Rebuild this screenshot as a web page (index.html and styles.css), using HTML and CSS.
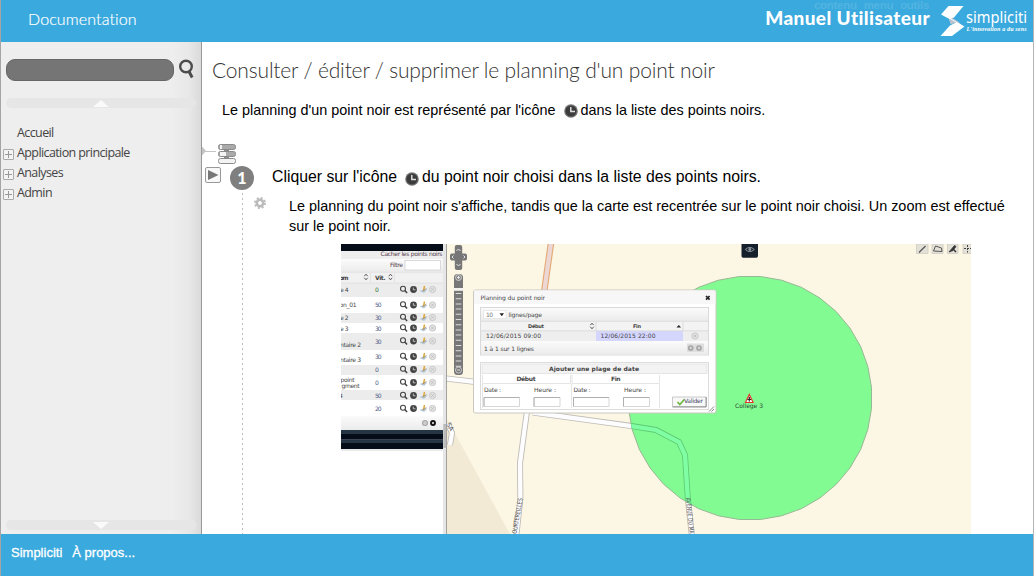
FILE: index.html
```html
<!DOCTYPE html>
<html lang="fr">
<head>
<meta charset="utf-8">
<title>Manuel Utilisateur</title>
<link rel="stylesheet" href="styles.css">
</head>
<body>
<svg class="defs" width="0" height="0">
  <defs>
    <linearGradient id="soft" x1="0" y1="0" x2="0" y2="1"><stop offset="0" stop-color="#fbfbfb"/><stop offset="1" stop-color="#ebebeb"/></linearGradient>
    <symbol id="clock" viewBox="0 0 14 14"><circle cx="7" cy="7" r="6.8" fill="#777"/><circle cx="7" cy="7" r="5.6" fill="#3c3c3c"/><path d="M6.800 3v4.400H11" fill="none" stroke="#ddd" stroke-width="1.500"/></symbol>
    <symbol id="off" viewBox="0 0 8 8"><circle cx="4" cy="4" r="3.200" fill="#e2e2e2" stroke="#c8c8c8" stroke-width=".9"/><path d="M2.700 2.700l2.600 2.600M5.300 2.700L2.700 5.300" stroke="#bbb" stroke-width=".8"/></symbol>
    <g id="tools">
      <circle cx="403" cy="-.8" r="2.500" fill="none" stroke="#444" stroke-width="1.100"/><path d="M404.800 1l2.300 2.500" stroke="#444" stroke-width="1.500"/>
      <circle cx="413.500" cy="0" r="3.400" fill="#444"/><path d="M413.300-2v2.300h2.200" fill="none" stroke="#ccc" stroke-width=".9"/>
      <path d="M419.500 1.500l4-1.500 4 0-3.500 3.500z" fill="#b5c9dc"/><path d="M424.500-3.500l-1 5" stroke="#dda83c" stroke-width="1.500"/><path d="M426.500-1l-4 2.500" stroke="#9a8a70" stroke-width=".8"/>
      <use href="#off" x="428.500" y="-4" width="8" height="8"/>
    </g>
    <g id="sort"><path d="M-1.700-.8L0-2.800 1.700-.8M-1.700.8L0 2.800 1.700.8" fill="none" stroke="#333" stroke-width=".8"/></g>
  </defs>
</svg>
<div class="page">
  <header class="top">
    <a class="top-doc">Documentation</a>
    <div class="skip"><span>contenu</span><span>menu</span><span>outils</span></div>
    <div class="brand">
      <span class="brand-title">Manuel Utilisateur</span>
      <svg class="logo" width="90" height="36" viewBox="938 3 90 36">
        <path d="M948 16l9 5.500 4 4.500-7-2-6-4z" fill="#b9c4d1"/>
        <path d="M947.500 6h15l-9.500 11.500-3 1 13.500 8L951 36h-11.500l9.500-10.500 6-3L940 14.500z" fill="#fff"/>
        <path d="M948 18.500l7.500 4-6 1.800z" fill="#b9c4d1"/>
        <text class="logo-name" x="965" y="23" textLength="61" lengthAdjust="spacingAndGlyphs">simpliciti</text>
        <text class="logo-tag" x="965.500" y="31.300" textLength="60">L'innovation a du sens</text>
      </svg>
    </div>
  </header>
  <div class="middle">
    <aside class="side">
      <div class="search">
        <input class="search-field" type="text" aria-label="Recherche">
        <svg width="18" height="20" viewBox="0 0 18 20"><circle cx="9" cy="7.500" r="5.800" fill="none" stroke="#4c4c4c" stroke-width="2.400"/><path d="M12 12.500l3.200 6" stroke="#4c4c4c" stroke-width="3"/></svg>
      </div>
      <div class="scroll-bar"><i class="arrow up"></i></div>
      <nav class="menu">
        <a class="leaf">Accueil</a>
        <a><i class="plus"></i>Application principale</a>
        <a><i class="plus"></i>Analyses</a>
        <a><i class="plus"></i>Admin</a>
      </nav>
      <div class="scroll-bar bottom"><i class="arrow down"></i></div>
    </aside>
    <main class="content">
      <h1>Consulter / éditer / supprimer le planning d'un point noir</h1>
      <p class="intro"><span>Le planning d'un point noir est représenté par l'icône</span><svg width="14" height="14"><use href="#clock"/></svg><span>dans la liste des points noirs.</span></p>
      <div class="collapse">
        <svg width="36" height="22" viewBox="202 143 36 22">
          <path d="M202 146.500l4 4.500-4 4.500z" fill="#c4c4c4"/><path d="M205 151.500h11" stroke="#c4c4c4"/>
          <path d="M224 148h5v14h-5z" fill="#8a8a8a"/>
          <g stroke="#8a8a8a"><rect x="218.500" y="144.500" width="17" height="5" rx="2" fill="#aaa"/><rect x="218.500" y="151.500" width="17" height="5" rx="2" fill="#aaa"/><rect x="218.500" y="158.500" width="17" height="5" rx="2" fill="#f3f3f3"/></g>
          <path d="M220 145h2v4h-2zM220 152h6v4h-6z" fill="#f3f3f3"/>
        </svg>
      </div>
      <section class="step">
        <div class="rail">
          <svg class="play" width="16" height="16"><rect x=".5" y=".5" width="15" height="15" rx="1.500" fill="#f8f8f8" stroke="#999"/><path d="M3 3l10.500 5L3 13z" fill="#777"/></svg>
          <b class="number">1</b>
        </div>
        <div class="step-main">
          <p class="step-title"><span>Cliquer sur l'icône</span><svg width="14" height="14"><use href="#clock"/></svg><span>du point noir choisi dans la liste des points noirs.</span></p>
          <div class="result">
            <svg class="gear" width="12" height="12" viewBox="-6 -6 12 12"><circle r="3.200" fill="none" stroke="#bbb" stroke-width="2.600"/><circle r="5" fill="none" stroke="#bbb" stroke-width="2" stroke-dasharray="2 1.927"/></svg>
            <p>Le planning du point noir s'affiche, tandis que la carte est recentrée sur le point noir choisi. Un zoom est effectué<br>sur le point noir.</p>
          </div>
          <svg class="shot" width="630" height="290" viewBox="341 244 630 290">
            <!-- map background -->
            <path d="M341 244h630v290H341z" fill="#fcf6e4"/>
            <path d="M447 419l63 115h-63z" fill="#f3ead5"/>
            <!-- roads -->
            <g fill="none" stroke-linejoin="round">
              <path d="M551 243l-7 50" stroke="#e3a873" stroke-width="6.500"/><path d="M551 243l-7 50" stroke="#ecd7d5" stroke-width="4.300"/>
              <g stroke="#bdbbb4" stroke-width="6"><path d="M446 378.500l30 3.500"/><path d="M533 412.500l97 13.300 26 4.200 23 12 6 13 2.800 43 4 37"/><path d="M527 411l-7 52 .4 35-4 37"/><path d="M448 424l4 9-2 12"/></g>
              <g stroke="#fdfcff" stroke-width="4.300"><path d="M446 378.500l30 3.500"/><path d="M533 412.500l97 13.300 26 4.200 23 12 6 13 2.800 43 4 37"/><path d="M527 411l-7 52 .4 35-4 37"/><path d="M448 424l4 9-2 12"/></g>
            </g>
            <clipPath id="zone"><path id="ring" d="M760.600 276.500l21 3.700 20 7.200 18.400 10.700 16.300 13.600 13.600 16.300 10.700 18.400 7.200 20 3.700 21v21.200l-3.700 21-7.200 20-10.700 18.400-13.600 16.300-16.300 13.600-18.400 10.700-20 7.200-21 3.700h-21.200l-21-3.700-20-7.200-18.400-10.700-16.300-13.600-13.600-16.300-10.700-18.400-7.200-20-3.700-21v-21.200l3.700-21 7.200-20 10.700-18.400 13.600-16.300 16.300-13.600 18.400-10.700 20-7.200 21-3.700z"/></clipPath>
            <use href="#ring" fill="#82fc92" stroke="#97b894"/>
            <g clip-path="url(#zone)" fill="none"><path d="M533 412.500l97 13.300 26 4.200 23 12 6 13 2.800 43 4 37" stroke="#60cb74" stroke-width="6"/><path d="M533 412.500l97 13.300 26 4.200 23 12 6 13 2.800 43 4 37" stroke="#7ffea4" stroke-width="4.300"/></g>
            <g class="street">
              <text transform="translate(516.500 534) rotate(-80)" textLength="36" lengthAdjust="spacingAndGlyphs">OURTEREILLES</text>
              <text transform="translate(685.800 498) rotate(84)" textLength="36" lengthAdjust="spacingAndGlyphs">AVENUE DU MA</text>
              <text transform="translate(446 424) rotate(60)">SA</text>
            </g>
            <path d="M749.300 394.500l3.800 8h-7.600z" fill="#fff" stroke="#e23b2e" stroke-width="1.200"/><path d="M749.300 397v4.500M747.500 399.500h3.600" stroke="#222" stroke-width="1.200"/>
            <text class="s7" x="735" y="408" textLength="28" fill="#2f4a32">College 3</text>
            <!-- pan and zoom control -->
            <g fill="#777">
              <path d="M454.800 247q0-2 2-2h3.400q2 0 2 2v6.500h3q1.800 0 1.800 2v3q0 2-1.800 2h-3v7.500q0 2-2 2h-3.400q-2 0-2-2v-7.500h-3q-1.800 0-1.800-2v-3q0-2 1.800-2h3z"/>
              <rect x="454" y="274" width="9" height="101" rx="3.500"/>
            </g>
            <path d="M456.500 251l2-2 2 2M456.500 264l2 2 2-2M453.500 255.500l-1.500 1.500 1.500 1.500M463.500 255.500l1.500 1.500-1.500 1.500" fill="none" stroke="#eee" stroke-width=".9"/>
            <circle cx="458.500" cy="277.500" r="3" fill="#888" stroke="#ddd" stroke-width=".8"/><path d="M457 277.500h3M458.500 276v3M457 370h3" stroke="#eee" stroke-width=".9"/>
            <circle cx="458.500" cy="370" r="3" fill="none" stroke="#ddd" stroke-width=".8"/>
            <path d="M458.500 293v74" stroke="#ddd" stroke-width="5.500" stroke-dasharray="1 4.200"/><path d="M453.500 288h10v2.800h-10z" fill="#f4f2ec"/>
            <!-- map tools -->
            <path d="M741.500 244h16.500v12q0 1.700-1.700 1.700h-13.100q-1.700 0-1.700-1.700z" fill="#15202c"/><path d="M745.300 249.500q4.500-4.200 9 0-4.500 4.200-9 0z" fill="none" stroke="#8d969f"/><circle cx="749.800" cy="249.500" r="1.400" fill="#8d969f"/>
            <g fill="#e3e0d8" stroke="#cfcbc0" stroke-width=".8"><path d="M916.500 244h11.500v9.500h-11.500zM932 244h11v9.500h-11zM947.500 244h10.500v9.500h-10.500zM963 244h9v9.500h-9z"/></g>
            <path d="M919 252.500l6.500-6.500" stroke="#555" stroke-width="1.300"/><path d="M933.500 251l2-5 6 2 .5 3.500z" fill="none" stroke="#555"/><path d="M949 252l5.500-6.500 1.500 1-3 4z" fill="#333" stroke="#333" stroke-width=".8"/><path d="M953.500 249.500l2.500 2.500" stroke="#333" stroke-width="1.500"/><path d="M964 248.500h7M967.500 245v7.500" stroke="#444" stroke-dasharray="2 1"/>
            <!-- list panel -->
            <path d="M341 244h102v290H341z" fill="#fff"/>
            <path d="M341 244h102v7H341z" fill="#050d18"/><path d="M341 251h102v8H341z" fill="#eee"/>
            <path d="M341 259h102v13H341z" fill="url(#soft)"/><path d="M341 272h102v11H341z" fill="#f1f1f1"/>
            <path d="M341 283h102v14H341zM341 313h102v10H341zM341 333h102v17H341zM341 365h102v10H341zM341 390h102v10H341z" fill="#ececec"/>
            <path d="M341 416h102v14H341z" fill="url(#soft)"/>
            <path d="M341 272.300h102M341 283h102M394.500 273v10M370.500 273v10" stroke="#dcdcdc" stroke-width=".7"/>
            <path d="M341 430h102v9.500H341zM341 439.500h102v9.500H341z" fill="#050d18"/><path d="M341 430h102v4H341zM341 439.500h102v3.500H341z" fill="#263544"/><path d="M341 439.500h102" stroke="#667" stroke-width=".5"/>
            <path d="M341 449h102v2H341z" fill="#e9e9ea"/>
            <rect x="405" y="260.500" width="35.500" height="9.500" fill="#fff" stroke="#ccc" stroke-width=".7"/>
            <g class="s6">
              <text x="380.500" y="256" textLength="62" fill="#533b4c">Cacher les points noirs</text>
              <text x="390" y="267" textLength="13" fill="#533b4c">Filtre</text>
              <text x="339.500" y="279.500" class="bold" textLength="9">om</text><text x="375" y="279.500" class="bold" textLength="10.500">Vit.</text>
              <text x="340" y="291.500" textLength="8.500">e 4</text><text x="339.500" y="307" textLength="17">on_01</text><text x="340" y="320" textLength="8.500">e 2</text><text x="340" y="330.500" textLength="8.500">e 3</text>
              <text x="340" y="347" textLength="21">ntaire 2</text><text x="340" y="362" textLength="21">ntaire 3</text><text x="340.500" y="382" textLength="14">point</text><text x="341.500" y="388.300" textLength="18">gment</text><text x="339" y="397.500">4</text>
              <g fill="#50618a"><text x="375" y="291.500" fill="#373">0</text><text x="375" y="307" textLength="6.500">50</text><text x="375" y="320" textLength="6.500">30</text><text x="375" y="330.500" textLength="6.500">30</text><text x="375" y="343.500" textLength="6.500">30</text><text x="375" y="359" textLength="6.500">30</text><text x="375" y="372">0</text><text x="375" y="385">0</text><text x="375" y="398" textLength="6.500">50</text><text x="375" y="410.500" textLength="6.500">20</text></g>
            </g>
            <use href="#sort" x="366" y="277"/><use href="#sort" x="390.500" y="277"/>
            <use href="#tools" y="289.500"/><use href="#tools" y="305"/><use href="#tools" y="317.500"/><use href="#tools" y="328"/><use href="#tools" y="341"/><use href="#tools" y="356.500"/><use href="#tools" y="369.500"/><use href="#tools" y="382.500"/><use href="#tools" y="395.500"/><use href="#tools" y="408.500"/>
            <circle cx="425" cy="423" r="2.500" fill="#ccc" stroke="#aaa" stroke-width="1.200"/><circle cx="433" cy="423" r="2" fill="#eee" stroke="#111" stroke-width="1.900"/>
            <path d="M443 244h3.500v290H443z" fill="#e6e6e6"/><path d="M446.500 244v290" stroke="#999" stroke-width=".9"/><path d="M443.300 424h2.800v24h-2.800z" fill="#bbb"/>
            <!-- schedule dialog -->
            <rect x="473.500" y="290" width="242.500" height="123" rx="2" fill="#fff" stroke="#c9c7bf"/>
            <path d="M474 290.500h241.500V304H474z" fill="#f7f7f7"/>
            <path d="M706 296l3.600 3.600M709.600 296L706 299.600" stroke="#222" stroke-width="1.700"/>
            <rect x="480.500" y="307.500" width="228" height="47.500" fill="#f5f5f5" stroke="#d9d9d9"/>
            <path d="M481 308h227v13H481z" fill="url(#soft)"/><path d="M481 321h227v9.500H481z" fill="#f3f3f3"/><path d="M481 331h227v10H481z" fill="#eee"/><path d="M481 341h227v13.500H481z" fill="url(#soft)"/>
            <path d="M596 331h87v10h-87z" fill="#d4d6fe"/><path d="M481 321.300h227M481 330.800h227M596 322v9M683 322v9" stroke="#d5d5d5" stroke-width=".8"/>
            <path d="M483.500 310.500h22.500v8h-22.500z" fill="#fff" stroke="#ddd" stroke-width=".6"/><path d="M499.500 313.200h4.500l-2.200 3z" fill="#222"/><path d="M676.500 327.500h4.500l-2.200-2.500z" fill="#222"/>
            <use href="#sort" x="592" y="326"/><use href="#off" x="691" y="332" width="8" height="8"/>
            <path d="M687 343.500h17v8.500h-17z" fill="#dedede"/><g fill="#ddd" stroke="#a5a5a5" stroke-width="1.700"><circle cx="690.700" cy="348" r="2"/><circle cx="699" cy="348" r="2"/></g>
            <rect x="480.500" y="362.500" width="228" height="47" fill="#fff" stroke="#dcdcdc"/>
            <rect x="482" y="364" width="225" height="9.500" fill="#f3f3f3" stroke="#ddd" stroke-width=".7"/>
            <path d="M482.500 375v8.500h88V375M572 375v8.500h87.500V375M482.500 384v24M571.500 384v24M659.500 384v24" fill="none" stroke="#dedede" stroke-width=".8"/>
            <g fill="#fff" stroke="#ccc" stroke-width=".8"><path d="M484 397.500h35.500v9H484zM534 397.500h26v9h-26zM573.500 397.500h35.500v9h-35.500zM623.500 397.500h26v9h-26z"/></g>
            <path d="M484 406.500v-9h35.500M534 406.500v-9h26M573.500 406.500v-9h35.500M623.500 406.500v-9h26" fill="none" stroke="#aaa" stroke-width=".9"/>
            <path d="M672.500 397h33.500v9.500h-33.500z" fill="#f8f8f8" stroke="#bbb" stroke-width=".8"/><path d="M672.500 407H706.200v-10" fill="none" stroke="#888" stroke-width=".9"/><path d="M677.500 402l2.300 2.500 4.500-5" fill="none" stroke="#69b53a" stroke-width="1.600"/>
            <path d="M709 411.500l5-5M711.500 411.500l2.500-2.500" stroke="#777" stroke-width=".9"/>
            <g class="s6">
              <text x="480.500" y="299.700" textLength="64.500">Planning du point noir</text>
              <text x="486" y="316.500" textLength="7" fill="#777">10</text><text x="508.500" y="316.500" textLength="33.500">lignes/page</text>
              <text x="528" y="328.300" class="bold small" textLength="16">Début</text><text x="633" y="328.300" class="bold small" textLength="8">Fin</text>
              <text x="486" y="338.300" textLength="55">12/06/2015 09:00</text><text x="600.500" y="338.300" textLength="55">12/06/2015 22:00</text>
              <text x="484" y="351" textLength="50">1 à 1 sur 1 lignes</text>
              <text x="549" y="371.300" class="bold" textLength="90">Ajouter une plage de date</text>
              <text x="516.500" y="381.300" class="bold" textLength="19">Début</text><text x="611" y="381.300" class="bold" textLength="9.500">Fin</text>
              <text x="484" y="391.500" textLength="17">Date :</text><text x="534" y="391.500" textLength="22">Heure :</text><text x="573.500" y="391.500" textLength="17">Date :</text><text x="624" y="391.500" textLength="22">Heure :</text>
              <text x="684" y="403.300" textLength="19" fill="#446">Valider</text>
            </g>
          </svg>
        </div>
      </section>
    </main>
  </div>
  <footer class="foot"><a>Simpliciti</a><a>À propos...</a></footer>
</div>
</body>
</html>
```
FILE: styles.css
```css
* { box-sizing: border-box; }
body { margin: 0; font-family: "Liberation Sans", Arial, sans-serif; color: #000; }
p, h1 { margin: 0; }
.defs { position: absolute; }
.page { display: grid; grid-template-rows: 42px 492px 42px; height: 576px; border-left: 1px solid #a5a5a5; border-right: 1px solid #b5b5b5; overflow: hidden; }
.top { position: relative; display: flex; justify-content: space-between; background: #3aa9dd; color: #fff; padding: 0 4px 0 27px; }
.top-doc { font: 300 16px/37px Lato, sans-serif; letter-spacing: .12px; -webkit-text-stroke: .2px #fff; }
.skip { position: absolute; right: 104px; top: -2px; display: flex; gap: 7px; font-size: 11.500px; font-weight: 700; line-height: 14px; letter-spacing: -.3px; color: #52b4e2; }
.brand { display: flex; position: relative; }
.brand-title { font: 900 19px/36px Lato, sans-serif; letter-spacing: .4px; white-space: nowrap; margin-right: 9px; }
.logo { margin-top: 3px; }
.logo-name { font: 16px "Noto Sans", sans-serif; fill: #fff; }
.logo-tag { font: italic 700 6px "Liberation Serif", serif; fill: #fff; }
.middle { display: grid; grid-template-columns: 201px 1fr; min-height: 0; }
.side { display: flex; flex-direction: column; padding: 16px 5px 4px 0; border-right: 1px solid #999; background: linear-gradient(to right, #eee 170px, #e8e8e8 188px, #dadada 200px); }
.search { display: flex; gap: 3px; padding-left: 5px; height: 23px; }
.search svg { margin-top: 1px; }
.search-field { width: 168px; height: 22px; margin-top: 1px; border: 1px solid #666; border-radius: 9px; background: #757575; }
.scroll-bar { display: flex; justify-content: center; height: 10px; margin: 17px 0 0 5px; border-radius: 5px; background: #e6e6e6; }
.scroll-bar.bottom { margin-top: auto; }
.arrow { width: 0; height: 0; border: 8px solid transparent; }
.arrow.up { border-top: 0; border-bottom: 7px solid #fafafa; margin-top: 2px; }
.arrow.down { border-bottom: 0; border-top: 7px solid #fafafa; margin-top: 2px; }
.menu { display: flex; flex-direction: column; padding: 15px 0 0 2px; font: 12.500px/20px "Open Sans", sans-serif; letter-spacing: -.6px; color: #444; }
.menu a { display: flex; align-items: center; gap: 3px; }
.menu .leaf { padding-left: 14px; }
.plus { width: 11px; height: 11px; margin-top: 3px; border: 1px solid #aaa; border-radius: 1px; background: linear-gradient(#999, #999) center / 7px 1px no-repeat, linear-gradient(#999, #999) center / 1px 7px no-repeat, #f4f4f4; }
.content { overflow: hidden; background: #fff; }
h1 { font: 300 21px/30px Lato, sans-serif; color: #333; letter-spacing: -.17px; padding: 13px 0 0 10px; white-space: nowrap; }
.intro { display: flex; align-items: center; padding: 14px 0 0 20px; font-size: 14.400px; line-height: 22px; white-space: nowrap; }
.intro svg { margin: 2px 3px 0 8px; }
.collapse { height: 22px; margin-top: 22px; }
.collapse svg { display: block; }
.step { display: flex; }
.rail { display: flex; gap: 9px; width: 70px; height: 369px; padding-left: 3px; flex: none; background: repeating-linear-gradient(#bbb 0 2px, #fff 2px 5px) 40px 28px / 1px 400px no-repeat; }
.play { margin-top: 2px; flex: none; }
.number { width: 24px; height: 24px; margin-top: 1px; border-radius: 50%; background: #7f7f7f; color: #fff; font: 900 16px/24px Lato, sans-serif; text-align: center; }
.step-title { display: flex; align-items: center; height: 24px; font-size: 15.800px; white-space: nowrap; }
.step-title svg { margin: 4px 3px 0 8px; }
.result { display: flex; gap: 23px; margin: 7px 0 0 -18px; font-size: 14.430px; line-height: 20px; white-space: nowrap; }
.result .gear { flex: none; margin-top: 1px; }
.shot { display: block; margin: 8px 0 0 69px; font-family: "DejaVu Sans", sans-serif; }
.s6 { font-size: 6px; fill: #444; }
.s7 { font-size: 6px; }
.bold { font-weight: 700; }
.small { font-size: 5px; }
.street { font-size: 6.500px; fill: #555; }
.foot { display: flex; gap: 10px; padding: 9px 0 0 10px; background: #3aa9dd; color: #fff; font-size: 13px; line-height: 20px; -webkit-text-stroke: .3px #fff; }
```
